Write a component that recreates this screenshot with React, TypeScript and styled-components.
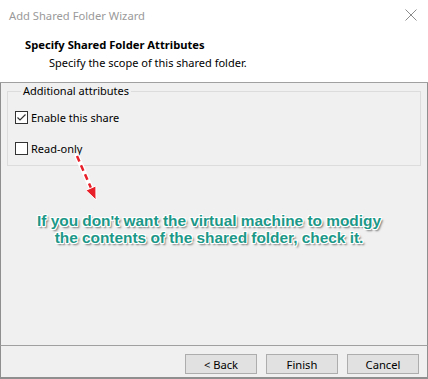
import React from 'react'
import styled, { createGlobalStyle } from 'styled-components'

const GlobalStyle = createGlobalStyle`
  html, body {
    margin: 0;
    padding: 0;
    background: #ffffff;
  }
  body {
    font-family: "Segoe UI", "Noto Sans", "Liberation Sans", sans-serif;
    font-size: 11px;
    color: #000;
  }
`

const Window = styled.div`
  position: relative;
  width: 428px;
  height: 379px;
  display: flex;
  flex-direction: column;
  background: #ffffff;
  overflow: hidden;
`

const TitleBar = styled.div`
  height: 30px;
  display: flex;
  align-items: center;
  justify-content: space-between;
  padding: 0 11px 0 9px;
  box-sizing: border-box;
  color: #9a9a9a;
  font-size: 11.2px;
`

const CloseIcon = () => (
  <svg width="12" height="12" viewBox="0 0 12 12">
    <path d="M0.5 0.5 L11.5 11.5 M11.5 0.5 L0.5 11.5" stroke="#8c8c8c" strokeWidth="1" fill="none" />
  </svg>
)

const Header = styled.div`
  height: 53px;
  box-sizing: border-box;
  padding: 7px 0 0 25px;
  border-bottom: 1px solid #a0a0a0;
`

const Heading = styled.div`
  font-weight: 700;
  font-size: 11.2px;
  line-height: 16px;
`

const SubHeading = styled.div`
  padding-left: 24px;
  line-height: 16px;
  margin-top: 2px;
`

const Body = styled.div`
  position: relative;
  flex: 1;
  display: flex;
  flex-direction: column;
  background: #f0f0f0;
  border-left: 1px solid #8f8f8f;
  border-right: 1px solid #8f8f8f;
  padding: 1px 6px 0 6px;
`

const GroupBox = styled.fieldset`
  margin: 0;
  padding: 11px 0 0 7px;
  height: 82px;
  box-sizing: border-box;
  border: 1px solid #dcdcdc;
  border-radius: 0;
`

const Legend = styled.legend`
  padding: 0 2px;
  margin-left: 6px;
  line-height: 14px;
`

const CheckRow = styled.label`
  display: flex;
  align-items: center;
  gap: 3px;
  height: 17px;
  margin-bottom: 14px;
`

const Box = styled.span`
  width: 13px;
  height: 13px;
  box-sizing: border-box;
  border: 1px solid #333333;
  background: #ffffff;
  display: flex;
  align-items: center;
  justify-content: center;
`

const CheckMark = () => (
  <svg width="11" height="11" viewBox="0 0 11 11">
    <path d="M1.5 5.5 L4 8 L9.5 2.5" stroke="#333" strokeWidth="1.2" fill="none" />
  </svg>
)

const Checkbox = ({ checked, label }: { checked?: boolean; label: string }) => (
  <CheckRow>
    <Box>{checked && <CheckMark />}</Box>
    <span>{label}</span>
  </CheckRow>
)

const Note = styled.div`
  margin-top: 46px;
  text-align: center;
  padding-right: 10px;
  font-family: "Liberation Sans", Arial, sans-serif;
  font-weight: 700;
  font-size: 15.4px;
  line-height: 17px;
  color: #1c9888;
  text-shadow:
    -1px -1px 0 #fff, 1px -1px 0 #fff, -1px 1px 0 #fff, 1px 1px 0 #fff,
    0 -1px 0 #fff, 0 1px 0 #fff, -1px 0 0 #fff, 1px 0 0 #fff,
    2px 2px 2px rgba(0, 0, 0, 0.55);
`

const ArrowLayer = styled.svg`
  position: absolute;
  left: 70px;
  top: 68px;
  overflow: visible;
`

const Footer = styled.div`
  height: 34px;
  box-sizing: border-box;
  display: flex;
  justify-content: flex-end;
  gap: 9px;
  padding: 8px 8px 0 0;
  background: #f0f0f0;
  border-top: 1px solid #a0a0a0;
  border-left: 1px solid #8f8f8f;
  border-right: 1px solid #8f8f8f;
  border-bottom: 2px solid #8f8f8f;
`

const Button = styled.button`
  width: 72px;
  height: 20px;
  box-sizing: border-box;
  border: 1px solid #adadad;
  background: #e1e1e1;
  font-family: inherit;
  font-size: 11.2px;
  color: #000;
  padding: 0;
`

export default function App() {
  return (
    <>
      <GlobalStyle />
      <Window>
        <TitleBar>
          <span>Add Shared Folder Wizard</span>
          <CloseIcon />
        </TitleBar>
        <Header>
          <Heading>Specify Shared Folder Attributes</Heading>
          <SubHeading>Specify the scope of this shared folder.</SubHeading>
        </Header>
        <Body>
          <GroupBox>
            <Legend>Additional attributes</Legend>
            <Checkbox checked label="Enable this share" />
            <Checkbox label="Read-only" />
          </GroupBox>
          <Note>
            If you don't want the virtual machine to modigy
            <br />
            the contents of the shared folder, check it.
          </Note>
          <ArrowLayer width="40" height="50" viewBox="0 0 40 50">
            <path d="M6 5 L20 37" stroke="#fff" strokeWidth="5" fill="none" strokeLinecap="round" />
            <path d="M6 5 L20 37" stroke="#e8202a" strokeWidth="2.5" fill="none" strokeDasharray="6 4" />
            <path d="M14.9 39.3 L25 49 L24.9 34.9 Z" fill="#e8202a" stroke="#fff" strokeWidth="1" strokeLinejoin="round" />
          </ArrowLayer>
        </Body>
        <Footer>
          <Button>&lt; Back</Button>
          <Button>Finish</Button>
          <Button>Cancel</Button>
        </Footer>
      </Window>
    </>
  )
}
